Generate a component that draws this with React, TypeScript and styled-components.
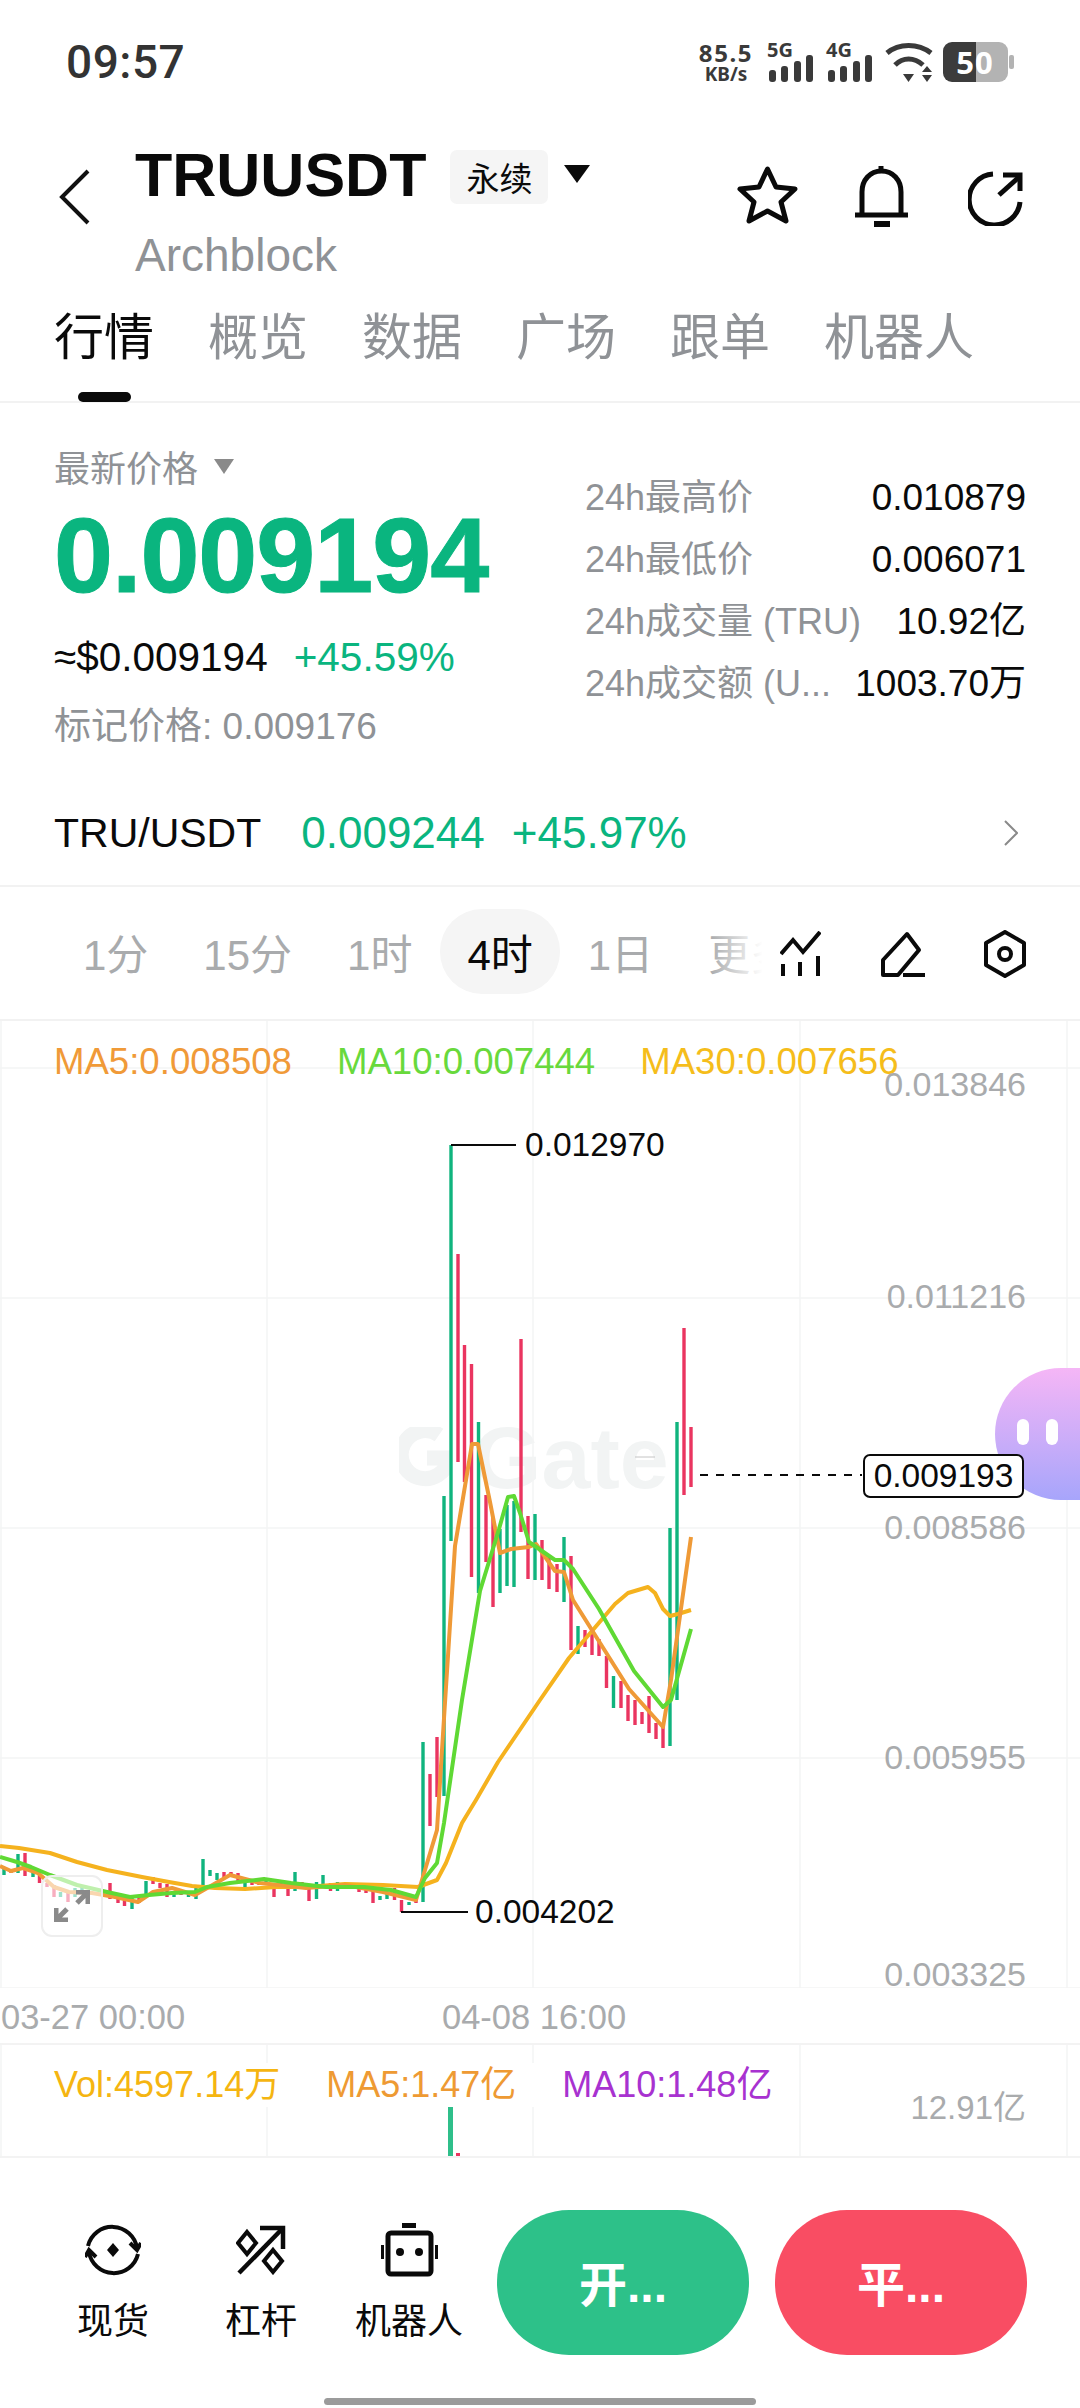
import React from 'react';
import styled, { createGlobalStyle } from 'styled-components';

const GlobalStyle = createGlobalStyle`
  html, body { margin: 0; padding: 0; background: #fff; }
  * { box-sizing: border-box; }
`;

const GREEN = '#0ab57f';
const GREY = '#8f9296';
const AXIS = '#a9abad';

const Page = styled.div`
  width: 1080px;
  height: 2408px;
  overflow: hidden;
  display: flex;
  flex-direction: column;
  background: #fff;
  color: #0a0a0a;
  font-family: "Liberation Sans", "Noto Sans CJK SC", sans-serif;
`;

/* status bar */
const StatusBar = styled.div`
  height: 122px;
  flex-shrink: 0;
  padding: 42px 66px 0 66px;
  display: flex;
  justify-content: space-between;
  align-items: flex-start;
`;

const Clock = styled.div`
  font-family: Roboto, sans-serif;
  font-size: 46px;
  font-weight: 500;
  line-height: 40px;
  color: #333;
  letter-spacing: 0.5px;
`;

const StatusIcons = styled.div`
  display: flex;
  align-items: flex-start;
`;

const NetSpeed = styled.div`
  width: 58px;
  margin-right: 14px;
  display: flex;
  flex-direction: column;
  align-items: center;
  font-family: "Noto Sans", sans-serif;
  font-weight: 700;
  color: #3a3a3a;
`;

const NetValue = styled.span`
  font-size: 24px;
  line-height: 22px;
  letter-spacing: 1.6px;
`;

const NetUnit = styled.span`
  font-size: 19px;
  line-height: 20px;
`;

const SignalGroup = styled.div`
  width: 59px;
  height: 42px;
  position: relative;
`;

const SignalLabel = styled.span`
  position: absolute;
  left: -2px;
  top: -2px;
  font-family: "Noto Sans", sans-serif;
  font-weight: 700;
  font-size: 20px;
  line-height: 20px;
  color: #3a3a3a;
`;

const BatteryText = styled.span`
  position: absolute;
  left: 13px;
  top: 0;
  width: 38px;
  text-align: center;
  font-family: "Noto Sans", sans-serif;
  font-weight: 700;
  font-size: 31px;
  line-height: 40px;
  letter-spacing: 1px;
  color: #fff;
`;

const BatteryBox = styled.div`
  width: 71px;
  height: 40px;
  margin-left: 9px;
  position: relative;
`;

const WifiIcon = styled.svg`
  margin-left: -2px;
`;

/* header */
const Header = styled.div`
  height: 168px;
  flex-shrink: 0;
  display: flex;
  padding-left: 58px;
`;

const BackIcon = styled.svg`
  width: 32px;
  height: 56px;
  margin-top: 47px;
  flex-shrink: 0;
`;

const TitleBlock = styled.div`
  margin-left: 45px;
  display: flex;
  flex-direction: column;
  width: 602px;
`;

const TitleRow = styled.div`
  display: flex;
  align-items: center;
  height: 60px;
  margin-top: 23px;
`;

const Title = styled.h1`
  margin: 0;
  font-size: 61px;
  line-height: 60px;
  font-weight: 700;
  letter-spacing: 0;
`;

const Badge = styled.span`
  margin-left: 24px;
  width: 98px;
  height: 54px;
  border-radius: 7px;
  background: #f5f5f5;
  font-size: 33px;
  display: flex;
  align-items: center;
  justify-content: center;
  margin-top: 4px;
`;

const Caret = styled.span<{ $w: number; $h: number; $color: string }>`
  width: 0;
  height: 0;
  border-left: ${p => p.$w / 2}px solid transparent;
  border-right: ${p => p.$w / 2}px solid transparent;
  border-top: ${p => p.$h}px solid ${p => p.$color};
`;

const TitleCaret = styled(Caret)`
  margin-left: 16px;
  margin-top: -2px;
`;

const SubTitle = styled.div`
  margin-top: 24px;
  font-size: 46px;
  line-height: 52px;
  color: ${GREY};
`;

const HeaderActions = styled.div`
  display: flex;
  align-items: flex-start;
  padding-top: 44px;
`;

const ActionIcon = styled.svg<{ $left: number; $top?: number }>`
  margin-left: ${p => p.$left}px;
  margin-top: ${p => p.$top ?? 0}px;
  flex-shrink: 0;
`;

/* tabs */
const Tabs = styled.div`
  height: 113px;
  flex-shrink: 0;
  display: flex;
  gap: 54px;
  padding-left: 54px;
  border-bottom: 2px solid #f2f2f2;
  position: relative;
`;

const Tab = styled.div<{ $active?: boolean }>`
  font-size: 50px;
  line-height: 60px;
  margin-top: 18px;
  color: ${p => (p.$active ? '#0a0a0a' : GREY)};
  position: relative;
  ${p =>
    p.$active
      ? `&::after {
    content: '';
    position: absolute;
    left: 24px;
    top: 84px;
    width: 53px;
    height: 10px;
    border-radius: 5px;
    background: #0a0a0a;
  }`
      : ''}
`;

/* price */
const PriceSection = styled.div`
  height: 378px;
  flex-shrink: 0;
  display: flex;
  padding-left: 54px;
`;

const PriceLeft = styled.div`
  width: 531px;
  flex-shrink: 0;
  display: flex;
  flex-direction: column;
`;

const PriceLabel = styled.div`
  margin-top: 43px;
  height: 40px;
  display: flex;
  align-items: center;
  gap: 16px;
  font-size: 36px;
  color: ${GREY};
`;

const BigPrice = styled.div`
  margin-top: 17px;
  font-size: 106px;
  line-height: 104px;
  font-weight: 700;
  letter-spacing: -1px;
  -webkit-text-stroke: 1px ${GREEN};
  color: ${GREEN};
`;

const SubPrice = styled.div`
  margin-top: 28px;
  display: flex;
  gap: 26px;
  font-size: 40.5px;
  line-height: 44px;
`;

const GreenText = styled.span`
  color: ${GREEN};
`;

const MarkPrice = styled.div`
  margin-top: 28px;
  font-size: 37px;
  line-height: 40px;
  color: ${GREY};
`;

const Stats = styled.div`
  flex: 1;
  padding: 64px 54px 0 0;
  display: flex;
  flex-direction: column;
`;

const StatRow = styled.div`
  height: 62px;
  line-height: 62px;
  display: flex;
  justify-content: space-between;
  align-items: baseline;
  font-size: 37px;
`;

const StatLabel = styled.span`
  font-size: 36px;
  color: ${GREY};
  white-space: nowrap;
`;

const PairRow = styled.div`
  height: 106px;
  flex-shrink: 0;
  display: flex;
  align-items: center;
  padding: 0 62px 0 54px;
  border-bottom: 2px solid #f2f2f2;
`;

const PairName = styled.span`
  font-size: 41px;
  margin-right: 40px;
`;

const PairValue = styled.span`
  font-size: 44px;
  color: ${GREEN};
  margin-right: 27px;
`;

const PairChevron = styled.svg`
  margin-left: auto;
`;

/* interval selector */
const IntervalBar = styled.div`
  height: 134px;
  flex-shrink: 0;
  display: flex;
  align-items: center;
  padding-bottom: 3px;
  border-bottom: 2px solid #f2f2f2;
`;

const IntervalScroll = styled.div`
  width: 780px;
  flex-shrink: 0;
  padding-left: 56px;
  display: flex;
  gap: 1px;
  overflow: hidden;
  position: relative;
  &::after {
    content: '';
    position: absolute;
    right: 0;
    top: 0;
    bottom: 0;
    width: 70px;
    background: linear-gradient(to right, rgba(255, 255, 255, 0), #fff 75%);
  }
`;

const Interval = styled.div<{ $active?: boolean }>`
  height: 85px;
  padding: 0 27px;
  border-radius: 42px;
  flex-shrink: 0;
  display: flex;
  align-items: center;
  font-size: 42px;
  white-space: nowrap;
  color: ${p => (p.$active ? '#0a0a0a' : AXIS)};
  background: ${p => (p.$active ? '#f5f5f5' : 'transparent')};
`;

const ToolIcon = styled.svg<{ $left: number }>`
  margin-left: ${p => p.$left}px;
  margin-top: 4px;
  flex-shrink: 0;
`;

/* chart */
const ChartPanel = styled.div`
  height: 967px;
  flex-shrink: 0;
  position: relative;
  overflow: hidden;
`;

const ChartLegend = styled.div`
  position: absolute;
  left: 54px;
  top: 19px;
  display: flex;
  gap: 45px;
  font-size: 36.6px;
  line-height: 44px;
`;

const LegendItem = styled.span<{ $color: string }>`
  color: ${p => p.$color};
  white-space: nowrap;
`;

const Watermark = styled.div`
  position: absolute;
  left: 399px;
  top: 394px;
  display: flex;
  align-items: center;
  gap: 22px;
  color: #f2f4f4;
  font-size: 88px;
  line-height: 86px;
  font-weight: 700;
`;

const ChartSvg = styled.svg`
  position: absolute;
  left: 0;
  top: 0;
`;

const AxisLabel = styled.span<{ $y: number }>`
  position: absolute;
  right: 54px;
  top: ${p => p.$y - 1021 - 20}px;
  font-size: 34px;
  line-height: 40px;
  color: ${AXIS};
`;

const Extreme = styled.span<{ $x: number; $y: number }>`
  position: absolute;
  left: ${p => p.$x}px;
  top: ${p => p.$y - 1021 - 20}px;
  font-size: 33.5px;
  line-height: 40px;
  color: #0a0a0a;
`;

const Bubble = styled.div`
  position: absolute;
  right: 0;
  top: 347px;
  width: 85px;
  height: 132px;
  border-radius: 66px 0 0 66px;
  background: linear-gradient(to bottom, #f5b6f6, #a7a5fb);
  display: flex;
  justify-content: center;
  gap: 17px;
  padding-top: 51px;
`;

const BubbleEye = styled.span`
  width: 12px;
  height: 26px;
  border-radius: 6px;
  background: #fff;
`;

const LastPrice = styled.div`
  position: absolute;
  left: 863px;
  top: 433px;
  width: 161px;
  height: 44px;
  border: 2px solid #0a0a0a;
  border-radius: 7px;
  background: #fff;
  font-size: 33.5px;
  display: flex;
  align-items: center;
  justify-content: center;
`;

const ExpandButton = styled.div`
  position: absolute;
  left: 41px;
  top: 854px;
  width: 62px;
  height: 62px;
  border-radius: 11px;
  border: 2px solid #eeeeee;
  background: rgba(255, 255, 255, 0.6);
  display: flex;
  align-items: center;
  justify-content: center;
`;

const TimeAxis = styled.div`
  height: 57px;
  flex-shrink: 0;
  display: flex;
  padding-left: 1px;
  border-bottom: 2px solid #f3f3f3;
  font-size: 34.5px;
  line-height: 58px;
  color: ${AXIS};
`;

const TimeLabel = styled.span`
  width: 441px;
`;

/* volume */
const VolumePanel = styled.div`
  height: 113px;
  flex-shrink: 0;
  position: relative;
  border-bottom: 2px solid #f3f3f3;
`;

const VolumeSvg = styled.svg`
  position: absolute;
  left: 0;
  top: 0;
`;

const VolumeLegend = styled.div`
  position: absolute;
  left: 54px;
  top: 18px;
  padding-right: 6px;
  background: #fff;
  display: flex;
  gap: 46px;
  font-size: 36px;
  line-height: 44px;
`;

const VolumeAxis = styled.span`
  position: absolute;
  right: 54px;
  top: 43px;
  font-size: 33px;
  line-height: 40px;
  color: ${AXIS};
`;

/* bottom bar */
const BottomBar = styled.div`
  flex: 1;
  display: flex;
  flex-direction: column;
`;

const BottomRow = styled.div`
  height: 240px;
  display: flex;
  padding: 52px 0 0 39px;
`;

const NavItem = styled.div`
  width: 148px;
  padding-top: 12px;
  display: flex;
  flex-direction: column;
  align-items: center;
`;

const NavIconBox = styled.div`
  height: 56px;
  display: flex;
  align-items: center;
  justify-content: center;
`;

const NavLabel = styled.span`
  margin-top: 24px;
  font-size: 36px;
  line-height: 40px;
  white-space: nowrap;
`;

const TradeButton = styled.div<{ $bg: string; $left: number }>`
  width: 252px;
  height: 145px;
  margin-left: ${p => p.$left}px;
  padding-bottom: 4px;
  border-radius: 72px;
  background: ${p => p.$bg};
  color: #fff;
  font-size: 48px;
  font-weight: 700;
  display: flex;
  align-items: center;
  justify-content: center;
`;

const HomeIndicator = styled.div`
  width: 432px;
  height: 7px;
  margin: 0 auto;
  border-radius: 4px;
  background: #9b9b9b;
`;

/* chart data, in page pixels */
type Candle = [number, 'g' | 'r', number, number];

const candles: Candle[] = [
  [4, 'g', 1868, 1875], [11, 'r', 1869, 1873], [18, 'g', 1854, 1873], [25, 'r', 1853, 1876],
  [33, 'g', 1870, 1877], [39.5, 'r', 1873, 1883], [47, 'r', 1883, 1887], [54, 'r', 1885, 1897],
  [60.5, 'g', 1892, 1897], [68, 'r', 1892, 1902], [75, 'g', 1888, 1897], [82, 'g', 1887, 1893],
  [110, 'r', 1883, 1899], [118, 'r', 1899, 1903], [124.5, 'r', 1900, 1906], [132, 'g', 1898, 1909],
  [139, 'r', 1897, 1903], [146, 'g', 1881, 1897], [153, 'r', 1877, 1884], [160, 'r', 1883, 1888],
  [167, 'r', 1884, 1897], [174, 'g', 1892, 1897], [181, 'r', 1890, 1895], [188.5, 'g', 1892, 1897],
  [196, 'g', 1888, 1899], [203, 'g', 1859, 1887], [210, 'g', 1870, 1876], [217, 'g', 1873, 1880],
  [224, 'r', 1872, 1878], [231, 'r', 1872, 1877], [238, 'r', 1873, 1882], [245, 'g', 1880, 1887],
  [252, 'r', 1882, 1885], [259, 'r', 1882, 1885], [266, 'g', 1880, 1883], [274, 'r', 1887, 1897],
  [281, 'r', 1883, 1887], [288, 'r', 1885, 1896], [295, 'g', 1872, 1891], [302, 'r', 1882, 1888],
  [309, 'r', 1887, 1901], [316.5, 'g', 1882, 1899], [323, 'g', 1875, 1888], [330.5, 'r', 1883, 1891],
  [337.5, 'g', 1882, 1891], [345, 'r', 1883, 1887], [359, 'r', 1888, 1892], [366, 'r', 1890, 1893],
  [373, 'r', 1890, 1903], [380, 'g', 1896, 1900], [387, 'g', 1893, 1899], [394.5, 'r', 1888, 1900],
  [401.5, 'r', 1900, 1912], [409, 'g', 1902, 1905], [416, 'r', 1900, 1903],
  [423, 'g', 1742, 1902], [430, 'r', 1774, 1826], [437, 'r', 1737, 1797], [444, 'g', 1496, 1796],
  [451, 'g', 1145, 1541], [458, 'r', 1254, 1462], [464.5, 'r', 1345, 1482], [471.5, 'r', 1364, 1577],
  [478.5, 'g', 1422, 1593], [486, 'r', 1495, 1562], [493, 'r', 1517, 1607], [500, 'g', 1529, 1593],
  [507, 'g', 1505, 1586], [514, 'g', 1501, 1587], [521, 'r', 1339, 1532], [528, 'r', 1516, 1579],
  [535, 'g', 1514, 1580], [542, 'r', 1540, 1580], [549, 'r', 1555, 1589], [557, 'r', 1564, 1592],
  [564, 'g', 1537, 1602], [571, 'r', 1556, 1650], [578, 'g', 1626, 1654], [585, 'r', 1630, 1647],
  [592, 'r', 1631, 1655], [599, 'r', 1639, 1656], [606.5, 'r', 1656, 1688], [613.5, 'g', 1676, 1708],
  [621, 'r', 1681, 1708], [628, 'r', 1695, 1721], [635, 'r', 1700, 1725], [642, 'r', 1712, 1724],
  [649, 'r', 1696, 1733], [656, 'r', 1723, 1739], [663, 'r', 1727, 1748], [670, 'g', 1528, 1746],
  [677, 'g', 1422, 1700], [684, 'r', 1328, 1495], [691, 'r', 1427, 1487],
];

const ma30 =
  '0,1846 19,1848 50,1853 77,1862 107,1870 142,1877 169,1882 192,1886 215,1888 245,1889 276,1887 306,1887 345,1884 383,1885 418,1887 437,1880 446,1863 462,1823 476,1800 498,1762 540,1700 569,1658 615,1604 628,1593 648,1587 655,1593 663,1609 670,1616 678,1614 691,1610';
const ma10 =
  '0,1857 17,1862 31,1867 50,1875 77,1885 107,1892 130,1897 149,1895 172,1893 195,1892 207,1887 230,1883 264,1879 291,1883 326,1887 364,1887 391,1890 416,1897 425,1878 437,1863 444,1823 462,1700 480,1591 499,1529 508,1497 514,1496 520,1513 529,1542 555,1560 564,1560 573,1569 599,1609 634,1671 663,1707 671,1700 691,1629';
const ma5 =
  '0,1866 11,1871 23,1868 38,1873 54,1887 69,1892 92,1893 115,1897 138,1902 153,1892 172,1888 195,1895 230,1875 260,1883 306,1888 345,1885 383,1892 416,1900 437,1830 443,1734 455,1546 472,1444 478,1444 490,1502 500,1553 511,1549 529,1547 536,1544 555,1571 564,1572 573,1600 629,1689 663,1727 671,1680 691,1537';

const gridX = [1, 267, 533, 800, 1067];
const gridY = [1068, 1298, 1528, 1758, 1988];

const axisLabels: [string, number][] = [
  ['0.013846', 1084],
  ['0.011216', 1296],
  ['0.008586', 1527],
  ['0.005955', 1757],
  ['0.003325', 1974],
];

const stats = [
  ['24h最高价', '0.010879'],
  ['24h最低价', '0.006071'],
  ['24h成交量 (TRU)', '10.92亿'],
  ['24h成交额 (U...', '1003.70万'],
];

const tabs = ['行情', '概览', '数据', '广场', '跟单', '机器人'];
const intervals = ['1分', '15分', '1时', '4时', '1日', '更多'];

const SignalBars = ({ label }: { label: string }) => (
  <SignalGroup>
    <SignalLabel>{label}</SignalLabel>
    <svg width="59" height="42" viewBox="0 0 59 42">
      <g fill="#3a3a3a">
        <rect x="0" y="28" width="7" height="12" rx="3" />
        <rect x="12" y="24" width="7" height="16" rx="3" />
        <rect x="25" y="19" width="7" height="21" rx="3" />
        <rect x="37" y="13" width="7" height="27" rx="3" />
      </g>
    </svg>
  </SignalGroup>
);

const App: React.FC = () => {
  return (
    <Page>
      <GlobalStyle />
      <StatusBar>
        <Clock>09:57</Clock>
        <StatusIcons>
          <NetSpeed>
            <NetValue>85.5</NetValue>
            <NetUnit>KB/s</NetUnit>
          </NetSpeed>
          <SignalBars label="5G" />
          <SignalBars label="4G" />
          <WifiIcon width="49" height="41" viewBox="0 0 49 41">
            <path d="M2 11 C14 1 33 1 46 11" fill="none" stroke="#3a3a3a" strokeWidth="5" />
            <path d="M10 23 C18 15 29 15 38 23" fill="none" stroke="#3a3a3a" strokeWidth="5" />
            <path d="M18 32 H29 L23.5 40 Z" fill="#3a3a3a" />
            <path d="M37 30 L42 24 L47 30 Z M37 33 H47 L42 40 Z" fill="#3a3a3a" />
          </WifiIcon>
          <BatteryBox>
            <svg width="71" height="40" viewBox="0 0 71 40">
              <path d="M9 0 H33 V40 H9 A9 9 0 0 1 0 31 V9 A9 9 0 0 1 9 0 Z" fill="#3c3c3c" />
              <path d="M33 0 H56 A9 9 0 0 1 65 9 V31 A9 9 0 0 1 56 40 H33 Z" fill="#b3b3b3" />
              <rect x="66" y="13" width="5" height="14" rx="2" fill="#b3b3b3" />
            </svg>
            <BatteryText>50</BatteryText>
          </BatteryBox>
        </StatusIcons>
      </StatusBar>

      <Header>
        <BackIcon viewBox="0 0 32 56">
          <path d="M30 2 L4 28 L30 54" fill="none" stroke="#111" strokeWidth="4" />
        </BackIcon>
        <TitleBlock>
          <TitleRow>
            <Title>TRUUSDT</Title>
            <Badge>永续</Badge>
            <TitleCaret $w={26} $h={18} $color="#0a0a0a" />
          </TitleRow>
          <SubTitle>Archblock</SubTitle>
        </TitleBlock>
        <HeaderActions>
          <ActionIcon $left={0} width="61" height="58" viewBox="0 0 61 58">
            <path
              d="M30.5 3 L39 21 L58 23 L44 36 L49 55 L30.5 45 L12 55 L17 36 L3 23 L22 21 Z"
              fill="none"
              stroke="#0a0a0a"
              strokeWidth="5"
              strokeLinejoin="round"
            />
          </ActionIcon>
          <ActionIcon $left={57} width="53" height="62" viewBox="0 0 53 62">
            <path d="M26 0 V6" stroke="#0a0a0a" strokeWidth="5" />
            <path d="M7 48 V26 C7 14 15 5 26.5 5 C38 5 46 14 46 26 V48" fill="none" stroke="#0a0a0a" strokeWidth="5" />
            <path d="M0 49 H53" stroke="#0a0a0a" strokeWidth="5" />
            <rect x="19" y="55" width="16" height="6" fill="#0a0a0a" />
          </ActionIcon>
          <ActionIcon $left={60} $top={5} width="55" height="55" viewBox="0 0 55 55">
            <path d="M25 3 A25.5 25.5 0 1 0 52 31" fill="none" stroke="#0a0a0a" strokeWidth="5" />
            <path d="M31 24 L51 6" fill="none" stroke="#0a0a0a" strokeWidth="5" />
            <path d="M35 4 H52 V20" fill="none" stroke="#0a0a0a" strokeWidth="5" />
          </ActionIcon>
        </HeaderActions>
      </Header>

      <Tabs>
        {tabs.map((t, i) => (
          <Tab key={t} $active={i === 0}>
            {t}
          </Tab>
        ))}
      </Tabs>

      <PriceSection>
        <PriceLeft>
          <PriceLabel>
            最新价格
            <Caret $w={21} $h={15} $color="#8a8a8a" />
          </PriceLabel>
          <BigPrice>0.009194</BigPrice>
          <SubPrice>
            <span>≈$0.009194</span>
            <GreenText>+45.59%</GreenText>
          </SubPrice>
          <MarkPrice>标记价格: 0.009176</MarkPrice>
        </PriceLeft>
        <Stats>
          {stats.map(([label, value]) => (
            <StatRow key={label}>
              <StatLabel>{label}</StatLabel>
              <span>{value}</span>
            </StatRow>
          ))}
        </Stats>
      </PriceSection>

      <PairRow>
        <PairName>TRU/USDT</PairName>
        <PairValue>0.009244</PairValue>
        <PairValue>+45.97%</PairValue>
        <PairChevron width="14" height="26" viewBox="0 0 14 26">
          <path d="M1 1 L13 13 L1 25" fill="none" stroke="#8a8a8a" strokeWidth="2" />
        </PairChevron>
      </PairRow>

      <IntervalBar>
        <IntervalScroll>
          {intervals.map(t => (
            <Interval key={t} $active={t === '4时'}>
              {t}
            </Interval>
          ))}
        </IntervalScroll>
        <ToolIcon $left={0} width="41" height="46" viewBox="0 0 41 46">
          <path d="M1 23 L13 9 L23 21 L40 1" fill="none" stroke="#0a0a0a" strokeWidth="4" />
          <path d="M3 33 V45 M20 31 V45 M38 25 V45" stroke="#0a0a0a" strokeWidth="4" />
        </ToolIcon>
        <ToolIcon $left={60} width="44" height="46" viewBox="0 0 44 46">
          <path d="M2 44 V29 L26 3 L38 19 L17 44 Z" fill="none" stroke="#0a0a0a" strokeWidth="4" strokeLinejoin="round" />
          <path d="M22 44 H44" stroke="#0a0a0a" strokeWidth="4" />
        </ToolIcon>
        <ToolIcon $left={58} width="44" height="48" viewBox="0 0 44 48">
          <path d="M22 2 L41 13 V35 L22 46 L3 35 V13 Z" fill="none" stroke="#0a0a0a" strokeWidth="4" strokeLinejoin="round" />
          <circle cx="22" cy="24" r="6" fill="none" stroke="#0a0a0a" strokeWidth="4" />
        </ToolIcon>
      </IntervalBar>

      <ChartPanel>
        <Watermark>
          <svg width="52" height="62" viewBox="0 0 52 62">
            <path d="M40 8 A24 24 0 1 0 50 31 H28" fill="none" stroke="#f2f4f4" strokeWidth="15" />
          </svg>
          Gate
        </Watermark>
        <ChartSvg width="1080" height="967" viewBox="0 1021 1080 967">
          {gridY.map(y => (
            <line key={y} x1="0" x2="1080" y1={y} y2={y} stroke="#f3f4f5" strokeWidth="1.5" />
          ))}
          {gridX.map(x => (
            <line key={x} x1={x} x2={x} y1="1021" y2="1988" stroke="#f3f4f5" strokeWidth="1.5" />
          ))}
          <line x1="635" x2="655" y1="1457" y2="1457" stroke="#c4c4c4" strokeWidth="1" />
          {candles.map(([x, c, top, bottom]) => (
            <rect key={x} x={x - 1.7} y={top} width="3.4" height={bottom - top} fill={c === 'g' ? '#10b47e' : '#ea3560'} />
          ))}
          <polyline points={ma30} fill="none" stroke="#f5b21e" strokeWidth="4" strokeLinejoin="round" />
          <polyline points={ma5} fill="none" stroke="#ef9a37" strokeWidth="4" strokeLinejoin="round" />
          <polyline points={ma10} fill="none" stroke="#5fd934" strokeWidth="4" strokeLinejoin="round" />
          <path d="M451 1145 H516 M401 1912 H468" stroke="#0a0a0a" strokeWidth="2" fill="none" />
          <path d="M700 1475 H862" stroke="#0a0a0a" strokeWidth="2" strokeDasharray="8 8" fill="none" />
        </ChartSvg>
        <ChartLegend>
          <LegendItem $color="#f09a38">MA5:0.008508</LegendItem>
          <LegendItem $color="#68d93c">MA10:0.007444</LegendItem>
          <LegendItem $color="#f5bd1b">MA30:0.007656</LegendItem>
        </ChartLegend>
        {axisLabels.map(([text, y]) => (
          <AxisLabel key={text} $y={y}>
            {text}
          </AxisLabel>
        ))}
        <Extreme $x={525} $y={1145}>0.012970</Extreme>
        <Extreme $x={475} $y={1912}>0.004202</Extreme>
        <Bubble>
          <BubbleEye />
          <BubbleEye />
        </Bubble>
        <LastPrice>0.009193</LastPrice>
        <ExpandButton>
          <svg width="36" height="32" viewBox="0 0 36 32">
            <path d="M2 30 L13 19 M2 18 V30 H14" fill="none" stroke="#8a8a8a" strokeWidth="5" />
            <path d="M34 2 L23 13 M34 14 V2 H22" fill="none" stroke="#8a8a8a" strokeWidth="5" />
          </svg>
        </ExpandButton>
      </ChartPanel>

      <TimeAxis>
        <TimeLabel>03-27 00:00</TimeLabel>
        <TimeLabel>04-08 16:00</TimeLabel>
      </TimeAxis>

      <VolumePanel>
        <VolumeSvg width="1080" height="111" viewBox="0 2045 1080 111">
          {gridX.map(x => (
            <line key={x} x1={x} x2={x} y1="2045" y2="2156" stroke="#f3f4f5" strokeWidth="1.5" />
          ))}
          <rect x="448" y="2107" width="5" height="49" fill="#2fbf8a" />
          <rect x="456" y="2153" width="4" height="3" fill="#ea3560" />
        </VolumeSvg>
        <VolumeLegend>
          <LegendItem $color="#f5b511">Vol:4597.14万</LegendItem>
          <LegendItem $color="#ee9a33">MA5:1.47亿</LegendItem>
          <LegendItem $color="#a832d0">MA10:1.48亿</LegendItem>
        </VolumeLegend>
        <VolumeAxis>12.91亿</VolumeAxis>
      </VolumePanel>

      <BottomBar>
        <BottomRow>
          <NavItem>
            <NavIconBox>
              <svg width="56" height="56" viewBox="0 0 56 56">
                <path d="M3 24 A25 25 0 0 1 52 26" fill="none" stroke="#0a0a0a" strokeWidth="4" />
                <path d="M45 21 L52 28 L56 21" fill="none" stroke="#0a0a0a" strokeWidth="4" />
                <path d="M53 32 A25 25 0 0 1 4 30" fill="none" stroke="#0a0a0a" strokeWidth="4" />
                <path d="M0 35 L4 28 L11 35" fill="none" stroke="#0a0a0a" strokeWidth="4" />
                <path d="M28 21 L34 28 L28 35 L22 28 Z" fill="#0a0a0a" />
              </svg>
            </NavIconBox>
            <NavLabel>现货</NavLabel>
          </NavItem>
          <NavItem>
            <NavIconBox>
              <svg width="50" height="50" viewBox="0 0 50 50">
                <path d="M3 48 L47 3" fill="none" stroke="#0a0a0a" strokeWidth="4.5" />
                <path d="M24 3 H47 V24" fill="none" stroke="#0a0a0a" strokeWidth="4.5" />
                <path d="M11 7 L20 18 L11 29 L2 18 Z" fill="none" stroke="#0a0a0a" strokeWidth="4" />
                <path d="M37 25 L46 36 L37 47 L28 36 Z" fill="none" stroke="#0a0a0a" strokeWidth="4" />
              </svg>
            </NavIconBox>
            <NavLabel>杠杆</NavLabel>
          </NavItem>
          <NavItem>
            <NavIconBox>
              <svg width="57" height="54" viewBox="0 0 57 54">
                <rect x="21" y="0" width="14" height="5" fill="#0a0a0a" />
                <rect x="7" y="10" width="43" height="41" rx="3" fill="none" stroke="#0a0a0a" strokeWidth="5" />
                <rect x="0" y="22" width="3" height="14" fill="#0a0a0a" />
                <rect x="54" y="22" width="3" height="14" fill="#0a0a0a" />
                <circle cx="19" cy="29" r="4" fill="#0a0a0a" />
                <circle cx="38" cy="29" r="4" fill="#0a0a0a" />
              </svg>
            </NavIconBox>
            <NavLabel>机器人</NavLabel>
          </NavItem>
          <TradeButton $bg="#2dc189" $left={14}>开...</TradeButton>
          <TradeButton $bg="#f94d63" $left={26}>平...</TradeButton>
        </BottomRow>
        <HomeIndicator />
      </BottomBar>
    </Page>
  );
};

export default App;
